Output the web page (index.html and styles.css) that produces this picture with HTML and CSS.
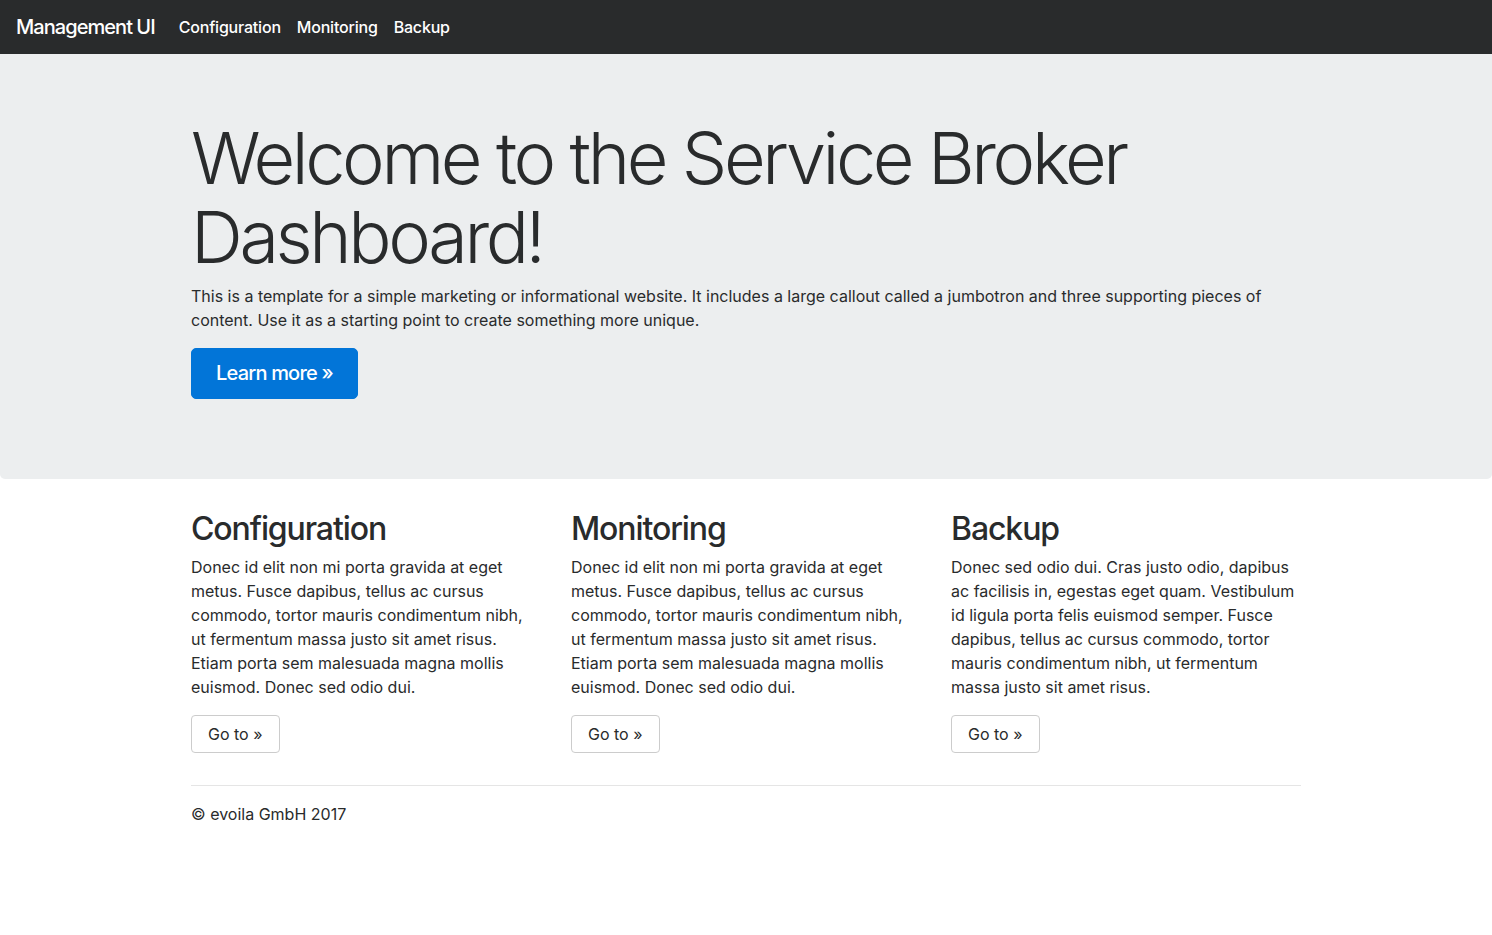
FILE: index.html
```html
<!DOCTYPE html>
<html lang="en">
<head>
<meta charset="utf-8">
<title>Management UI</title>
<link rel="stylesheet" href="styles.css">
</head>
<body>
<nav class="navbar">
  <a class="brand" href="#">Management UI</a>
  <ul class="nav">
    <li><a class="nav-link" href="#">Configuration</a></li>
    <li><a class="nav-link" href="#">Monitoring</a></li>
    <li><a class="nav-link" href="#">Backup</a></li>
  </ul>
</nav>
<div class="jumbotron">
  <div class="container">
    <h1 class="display">Welcome to the Service Broker Dashboard!</h1>
    <p>This is a template for a simple marketing or informational website. It includes a large callout called a jumbotron and three supporting pieces of content. Use it as a starting point to create something more unique.</p>
    <p><a class="btn-primary" href="#">Learn more &raquo;</a></p>
  </div>
</div>
<div class="container">
  <div class="row">
    <div class="col">
      <h2>Configuration</h2>
      <p>Donec id elit non mi porta gravida at eget metus. Fusce dapibus, tellus ac cursus commodo, tortor mauris condimentum nibh, ut fermentum massa justo sit amet risus. Etiam porta sem malesuada magna mollis euismod. Donec sed odio dui.</p>
      <p><a class="btn-secondary" href="#">Go to &raquo;</a></p>
    </div>
    <div class="col">
      <h2>Monitoring</h2>
      <p>Donec id elit non mi porta gravida at eget metus. Fusce dapibus, tellus ac cursus commodo, tortor mauris condimentum nibh, ut fermentum massa justo sit amet risus. Etiam porta sem malesuada magna mollis euismod. Donec sed odio dui.</p>
      <p><a class="btn-secondary" href="#">Go to &raquo;</a></p>
    </div>
    <div class="col">
      <h2>Backup</h2>
      <p>Donec sed odio dui. Cras justo odio, dapibus ac facilisis in, egestas eget quam. Vestibulum id ligula porta felis euismod semper. Fusce dapibus, tellus ac cursus commodo, tortor mauris condimentum nibh, ut fermentum massa justo sit amet risus.</p>
      <p><a class="btn-secondary" href="#">Go to &raquo;</a></p>
    </div>
  </div>
  <hr class="rule">
  <footer class="footer">
    <p>&copy; evoila GmbH 2017</p>
  </footer>
</div>
</body>
</html>
```
FILE: styles.css
```css
* { box-sizing: border-box; }
html, body { margin: 0; padding: 0; }
body {
  font-family: Inter, "Open Sans", "Liberation Sans", sans-serif;
  font-size: 16px;
  line-height: 1.5;
  color: #292b2c;
  background: #fff;
}
a { text-decoration: none; }
p { margin: 0 0 16px; }

.navbar {
  display: flex;
  align-items: center;
  height: 54px;
  padding: 8px 16px;
  background: #292b2c;
}
.brand {
  color: #fff;
  font-size: 20px;
  line-height: 30px;
  margin-right: 16px;
  letter-spacing: -0.95px;
  font-weight: 500;
}
.nav {
  display: flex;
  list-style: none;
  margin: 0;
  padding: 0;
}
.nav-link {
  display: block;
  padding: 8px;
  color: #fff;
  font-size: 16px;
  line-height: 24px;
  font-weight: 500;
  letter-spacing: -0.2px;
}

.container {
  width: 1110px;
  margin: 0 auto;
}

.jumbotron {
  background: #eceeef;
  padding: 64px 0;
  margin-bottom: 32px;
  border-radius: 0 0 5px 5px;
}
.display {
  font-size: 72px;
  font-weight: 300;
  line-height: 1.1;
  margin: 0 0 8px;
  letter-spacing: -3.4px;
}
.btn-primary {
  display: inline-block;
  background: #0275d8;
  color: #fff;
  border: 1px solid #0275d8;
  border-radius: 5px;
  padding: 12px 24px;
  font-size: 20px;
  line-height: 25px;
  letter-spacing: -0.8px;
  font-weight: 500;
}

.row {
  display: grid;
  grid-template-columns: repeat(3, 350px);
  column-gap: 30px;
}
h2 {
  font-size: 32px;
  font-weight: 500;
  line-height: 1.1;
  margin: 0 0 8px;
  letter-spacing: -1.1px;
}
.btn-secondary {
  display: inline-block;
  background: #fff;
  color: #292b2c;
  border: 1px solid #ccc;
  border-radius: 4px;
  padding: 8px 16px;
  font-size: 16px;
  line-height: 20px;
}
.rule {
  border: 0;
  border-top: 1px solid rgba(0,0,0,.1);
  margin: 16px 0;
}
.footer p { margin: 0; }
```
